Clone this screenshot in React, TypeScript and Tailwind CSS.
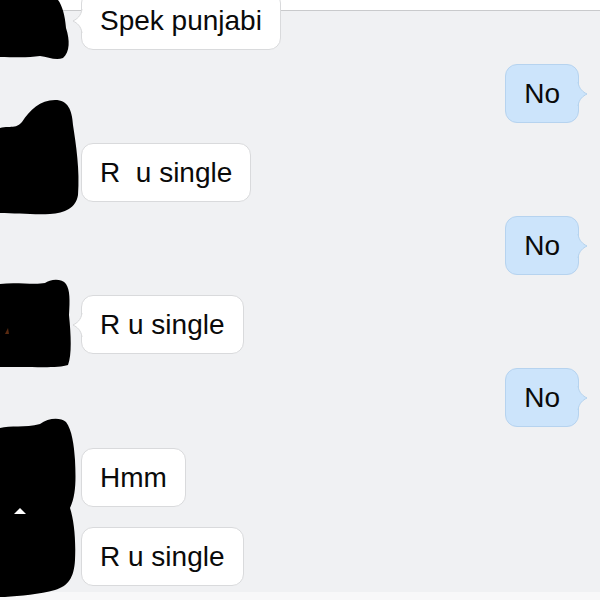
import React from "react";

const FONT = { fontFamily: '"Liberation Sans", Arial, Helvetica, sans-serif' };

function LeftTail() {
  return (
    <svg
      className="absolute left-[-10px] top-1/2 -translate-y-1/2"
      width="11"
      height="24"
      viewBox="0 0 11 24"
    >
      <path d="M11,0 L10,0 C9,7 5,10 1,12 C5,14 9,17 10,24 L11,24 Z" fill="#ffffff" />
      <path d="M10,0 C9,7 5,10 1,12 C5,14 9,17 10,24" fill="none" stroke="#d6d7d9" strokeWidth="1" />
    </svg>
  );
}

function RightTail() {
  return (
    <svg
      className="absolute right-[-10px] top-1/2 -translate-y-1/2"
      width="11"
      height="24"
      viewBox="0 0 11 24"
    >
      <path d="M0,0 L1,0 C2,7 6,10 10,12 C6,14 2,17 1,24 L0,24 Z" fill="#cce4fb" />
      <path d="M1,0 C2,7 6,10 10,12 C6,14 2,17 1,24" fill="none" stroke="#b4d2ee" strokeWidth="1" />
    </svg>
  );
}

function Left({ text, mt, tail = true }: { text: string; mt: string; tail?: boolean }) {
  return (
    <div className={`flex pl-[81px] ${mt}`}>
      <div className="relative flex h-[59px] items-center rounded-[12px] border border-[#d9dadc] bg-white px-[18px] text-[28px] whitespace-pre text-[#0a0a0a]">
        {tail && <LeftTail />}
        <span className="relative">{text}</span>
      </div>
    </div>
  );
}

function Right({ text, mt }: { text: string; mt: string }) {
  return (
    <div className={`flex justify-end pr-[21px] ${mt}`}>
      <div className="relative flex h-[59px] items-center rounded-[12px] border border-[#b6d3ef] bg-[#cce4fb] px-[18px] text-[28px] text-[#0a0a0a]">
        <RightTail />
        <span className="relative">{text}</span>
      </div>
    </div>
  );
}

function Blobs() {
  return (
    <svg
      className="pointer-events-none absolute left-0 top-0"
      width="600"
      height="600"
      viewBox="0 0 600 600"
    >
      <g fill="#000000">
        <path d="M0,0 L58,0 C62,5 65,15 66,28 C70,40 70,52 63,58 C56,61 48,57 40,56 C28,58 12,57 0,57 Z" />
        <path d="M0,128 C8,125 15,130 22,122 C30,110 40,100 55,100 C68,100 72,110 73,125 C76,145 80,170 78,195 C76,208 65,213 50,214 C35,215 15,213 0,213 Z" />
        <path d="M0,284 C15,282 35,285 45,283 C50,279 62,278 66,284 C70,290 70,300 69,315 C71,335 72,355 68,365 C60,368 40,367 20,367 C10,367 4,367 0,367 Z" />
        <path d="M0,428 C10,425 25,428 40,424 C48,418 60,417 66,422 C72,430 74,445 75,460 C76,480 76,495 70,508 C74,520 76,540 75,560 C74,578 68,586 55,590 C40,594 20,596 5,597 L0,597 Z" />
      </g>
      <path d="M14,514 L20,508 L26,514 Z" fill="#ffffff" />
      <path d="M5,334 L8,328 L9,334 Z" fill="#5a2a10" />
    </svg>
  );
}

export default function App() {
  return (
    <div className="relative flex h-[600px] w-[600px] flex-col overflow-hidden bg-white" style={FONT}>
      <div className="h-[11px] shrink-0 border-b border-[#c9cacc] bg-white" />
      <div className="flex flex-1 flex-col overflow-visible bg-[#f0f1f3]">
        <div className="relative z-10 -mt-[20px]">
          <Left text="Spek punjabi" mt="mt-0" />
        </div>
        <Right text="No" mt="mt-[14px]" />
        <Left text="R  u single" mt="mt-[20px]" tail={false} />
        <Right text="No" mt="mt-[14px]" />
        <Left text="R u single" mt="mt-[20px]" />
        <Right text="No" mt="mt-[14px]" />
        <Left text="Hmm" mt="mt-[21px]" tail={false} />
        <Left text="R u single" mt="mt-[20px]" tail={false} />
      </div>
      <div className="h-[8px] shrink-0 bg-[#f8f8f9]" />
      <Blobs />
    </div>
  );
}
